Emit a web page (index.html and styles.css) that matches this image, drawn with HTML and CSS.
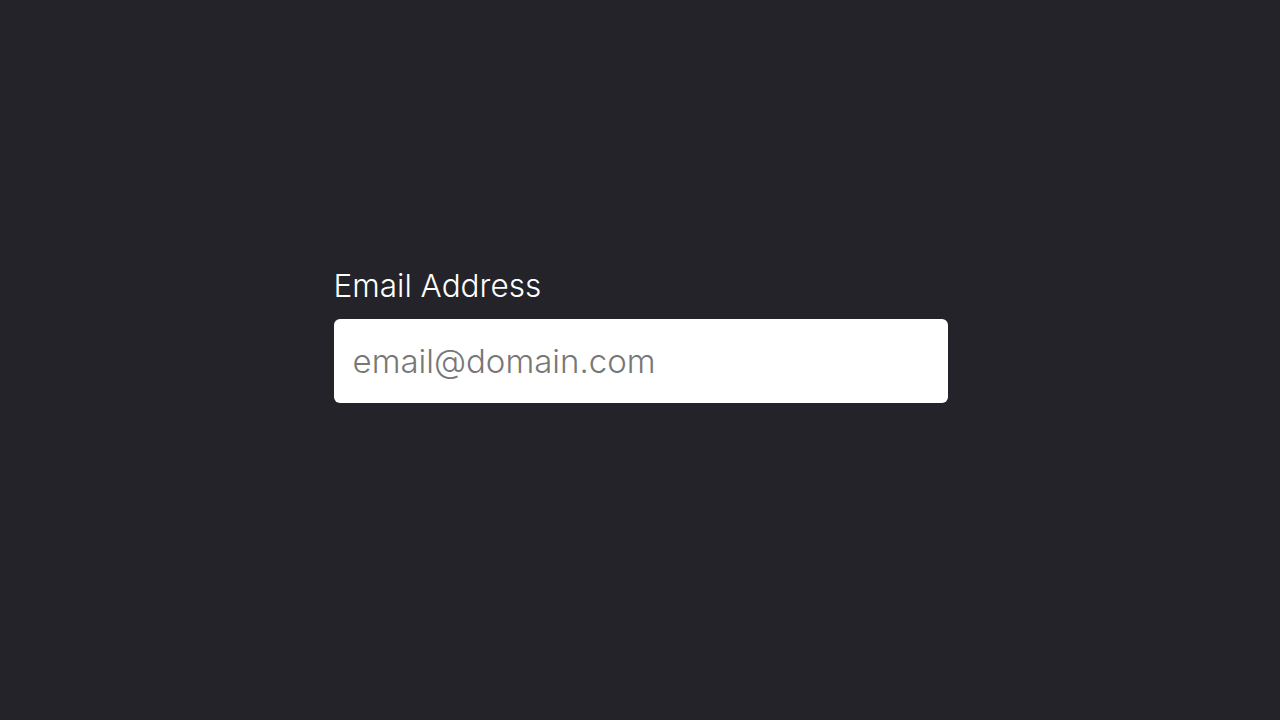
FILE: index.html
```html
<!DOCTYPE html>
<html lang="en">
<head>
<meta charset="utf-8">
<title>Email</title>
<link rel="stylesheet" href="styles.css">
</head>
<body>
<main class="page">
  <form class="field">
    <label class="label" for="email">Email Address</label>
    <input class="input" id="email" type="email" placeholder="email@domain.com">
  </form>
</main>
</body>
</html>
```
FILE: styles.css
```css
html, body {
  margin: 0;
  padding: 0;
  background: #24232a;
  height: 100%;
}
.page {
  display: flex;
  justify-content: center;
  padding-top: 265px;
  box-sizing: border-box;
  height: 100%;
}
.field {
  width: 614px;
  display: flex;
  flex-direction: column;
  margin-left: 1px;
}
.label {
  font-family: "Inter", "Lato", sans-serif;
  font-weight: 300;
  font-size: 31.5px;
  line-height: 42px;
  color: #ffffff;
  margin-bottom: 12px;
}
.input {
  box-sizing: border-box;
  height: 84px;
  width: 100%;
  border: none;
  border-radius: 6px;
  background: #ffffff;
  padding: 0 19px;
  font-family: "Inter", "Lato", sans-serif;
  font-weight: 300;
  font-size: 33px;
  color: #222;
  outline: none;
}
.input::placeholder {
  color: #777777;
  opacity: 1;
}
```
